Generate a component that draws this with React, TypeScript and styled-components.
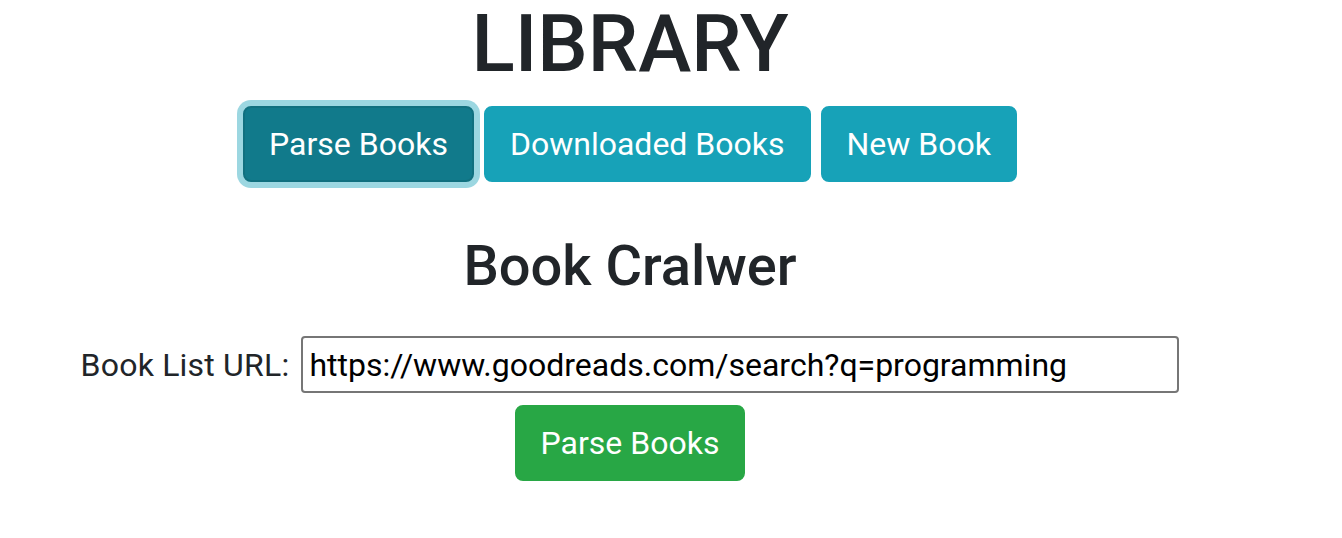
import React from "react";
import styled, { createGlobalStyle } from "styled-components";

const Global = createGlobalStyle`
  html, body { margin: 0; padding: 0; background: #fff; }
  body {
    font-family: Roboto, "Noto Sans", "Liberation Sans", sans-serif;
    color: #212529;
  }
`;

const Page = styled.div`
  width: 1260px;
  display: flex;
  flex-direction: column;
  align-items: center;
`;

const Title = styled.h1`
  margin: 0;
  font-size: 80px;
  font-weight: 500;
  line-height: 89px;
`;

const NavRow = styled.div`
  margin-top: 17px;
  display: flex;
  gap: 10px;
`;

const Btn = styled.button<{ $variant: "info" | "success"; $active?: boolean }>`
  height: 76px;
  padding: 0 24px;
  border-radius: 8px;
  border: 2px solid ${(p) => (p.$variant === "info" ? (p.$active ? "#10707f" : "#17a2b8") : "#28a745")};
  background: ${(p) => (p.$variant === "info" ? (p.$active ? "#117a8b" : "#17a2b8") : "#28a745")};
  color: #fff;
  font-family: inherit;
  font-size: 32px;
  font-weight: 400;
  box-shadow: ${(p) => (p.$active ? "0 0 0 6px rgba(58,176,195,0.5)" : "none")};
  cursor: pointer;
`;

const SubTitle = styled.h3`
  margin: 51px 0 0;
  font-size: 56px;
  font-weight: 500;
  line-height: 67px;
`;

const Form = styled.form`
  margin-top: 36px;
  display: flex;
  flex-direction: column;
  align-items: center;
  gap: 12px;
`;

const Field = styled.div`
  display: flex;
  align-items: center;
  gap: 12px;
`;

const Label = styled.label`
  font-size: 32px;
  letter-spacing: 0.2px;
`;

const Input = styled.input`
  width: 878px;
  height: 57px;
  box-sizing: border-box;
  border: 2px solid #767676;
  border-radius: 4px;
  padding: 0 6px;
  font-family: inherit;
  font-size: 32px;
  color: #000;
`;

export default function App() {
  return (
    <>
      <Global />
      <Page>
        <Title>LIBRARY</Title>
        <NavRow>
          <Btn $variant="info" $active>Parse Books</Btn>
          <Btn $variant="info">Downloaded Books</Btn>
          <Btn $variant="info">New Book</Btn>
        </NavRow>
        <SubTitle>Book Cralwer</SubTitle>
        <Form onSubmit={(e) => e.preventDefault()}>
          <Field>
            <Label htmlFor="url">Book List URL:</Label>
            <Input id="url" defaultValue="https://www.goodreads.com/search?q=programming" />
          </Field>
          <Btn $variant="success" type="submit">Parse Books</Btn>
        </Form>
      </Page>
    </>
  );
}
